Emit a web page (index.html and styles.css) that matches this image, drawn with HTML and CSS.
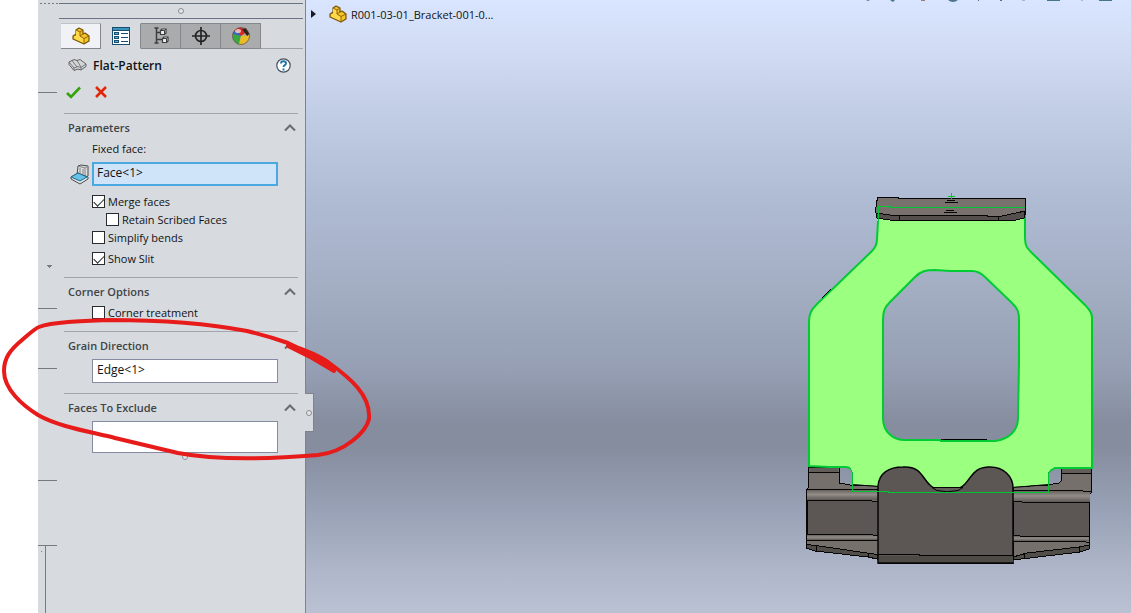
FILE: index.html
```html
<!DOCTYPE html>
<html lang="en">
<head>
<meta charset="utf-8">
<title>Flat-Pattern</title>
<link rel="stylesheet" href="styles.css">
</head>
<body>
<svg class="defs" aria-hidden="true">
  <symbol id="part" viewBox="0 0 18 18">
    <path d="M1 9 4 7V3L7 1 11 3V7L13 6 17 9V14L12 17 1 12Z" fill="#f5c526" stroke="#76520b" stroke-width="1.200" stroke-linejoin="round"/>
    <path d="M4 3 8 5V9L12 11.500V16L2 11.500V9.500L4 8Z" fill="#ffd84b"/>
    <path d="M4 3 8 5 11 3M8 5V9L12 11.500 17 9M12 11.500V17M8 9 11 7M1 9 4 8" fill="none" stroke="#92660b"/>
  </symbol>
  <symbol id="chevron" viewBox="0 0 12 8"><path d="M1 6.5 6 1.5 11 6.5" fill="none" stroke="#686b70" stroke-width="2"/></symbol>
</svg>
<div class="app">
  <div class="rail" aria-hidden="true">
    <svg viewBox="0 0 21 613" width="21" height="613" shape-rendering="crispEdges" fill="none" stroke="#777a7e">
      <path d="M2 3.5H20" stroke-dasharray="2 2"/>
      <path d="M0 92.500H19M0 308.500H19M0 368.500H19M0 480.500H19M0 545.500H19M7.500 545V613"/>
      <path d="M8 265H14L11 268ZM2 552 4 550V552Z" fill="#777a7e" stroke="none"/>
    </svg>
  </div>
  <aside class="panel">
    <div class="grip"><i class="dot"></i></div>
    <nav class="tabs">
      <button class="tab first" aria-label="Feature tree"><svg width="18" height="18"><use href="#part"/></svg></button>
      <button class="tab active" aria-label="Properties">
        <svg width="18" height="18" viewBox="0 0 18 18" shape-rendering="crispEdges"><path fill="#174e70" d="M0 0H18V18H0Z"/><path fill="#fff" d="M1 4H17V17H1Z"/><path fill="#3b94bd" d="M1 1H17V3H1Z"/><path fill="#174e70" d="M2 5H7V8H2ZM2 9H7V12H2ZM2 13H7V16H2ZM9 6H16V7H9ZM9 10H16V11H9ZM9 14H16V15H9Z"/><path fill="#59b4dc" d="M3 6H6V7H3ZM3 10H6V11H3ZM3 14H6V15H3Z"/></svg>
      </button>
      <button class="tab" aria-label="Configurations">
        <svg width="16" height="18" viewBox="0 0 16 18" fill="none" stroke="#3e3e3e"><path d="M1.500 1H5.500M3.500 1V16M1.500 16H5.500M4 5.500H8M4 12.500H9" stroke-width="1.500"/><path d="M7.500 3.500 9 2H13V6L11.500 7.500H7.500ZM9.500 11.500 11 10H15V14L13.500 15.500H9.500Z" fill="#eee" stroke-width="1.200"/><path d="M7.500 3.500H11.500V7.500M11.500 3.500 13 2M9.500 11.500H13.500V15.500M13.500 11.500 15 10"/></svg>
      </button>
      <button class="tab" aria-label="Dimensions">
        <svg width="18" height="18" viewBox="0 0 18 18" fill="none" stroke="#242424" stroke-width="1.700"><circle cx="9" cy="9" r="5.500"/><path d="M9 0V18M0 9H18"/></svg>
      </button>
      <button class="tab" aria-label="Appearance">
        <svg width="18" height="18" viewBox="0 0 18 18"><path fill="#d92820" d="M9 9 1 6A9 9 0 0 1 9 0.500L16 4Z"/><path fill="#3ba83f" d="M9 9 1 6A9 9 0 0 0 7 17.500Z"/><path fill="#e9bd25" d="M9 9 7 17.500A9 9 0 0 0 17.500 8Z"/><path fill="#3767bd" d="M9 9 1 7 2 4.500 5 4Z"/><path fill="#292222" d="M10 2 14 1 17.500 7 15 9Z"/><ellipse cx="6" cy="4" rx="3" ry="2" fill="#fff" opacity=".65"/><circle cx="9" cy="9" r="8.500" fill="none" stroke="#664b3b" stroke-width=".7"/></svg>
      </button>
      <span class="tabs-rest"></span>
    </nav>
    <header class="title">
      <svg width="19" height="14" viewBox="0 0 19 14" stroke="#606366" stroke-linejoin="round"><path d="M1 4 6 1.500 9 2.500 12 1.500 18 6V8.500L13 12 10 11 6 12.500 1 6.500Z" fill="#d3d4d5"/><path d="M1 4 6 10 10 8.500 13 9.500 18 6M4 2.500 9 9M9 2.500 13 9M6 10V12M13 9.500V12" fill="none" stroke-width=".8"/></svg>
      <h1>Flat-Pattern</h1>
      <button class="help" aria-label="Help"><svg width="15" height="15" viewBox="0 0 15 15"><circle cx="7.500" cy="7.500" r="6.700" fill="#fff" stroke="#44515c" stroke-width="1.200"/><path d="M5 5.500C5 2.500 10 2.500 10 5.500 10 7.200 7.500 7 7.500 9" fill="none" stroke="#1f76a8" stroke-width="1.900"/><path d="M6.500 10.500H8.500V12.500H6.500Z" fill="#1f76a8"/></svg></button>
    </header>
    <div class="actions">
      <button aria-label="OK"><svg width="15" height="13" viewBox="0 0 15 13"><path d="M1 7 5 11 14 1.500" fill="none" stroke="#35a10b" stroke-width="2.600"/></svg></button>
      <button aria-label="Cancel"><svg width="12" height="12" viewBox="0 0 12 12"><path d="M1 1 11 11M11 1 1 11" stroke="#e32406" stroke-width="2.500"/></svg></button>
    </div>
    <section>
      <div class="head"><h2>Parameters</h2><button aria-label="Collapse Parameters"><svg width="12" height="8"><use href="#chevron"/></svg></button></div>
      <label class="caption" for="face">Fixed face:</label>
      <div class="face-row">
        <svg width="19" height="21" viewBox="0 0 19 21" stroke="#484b4e" stroke-linejoin="round"><path d="M8 2 11 1 18 2V12L13 15 7 11Z" fill="#ddd"/><path d="M8 2 15 4V13M15 4 18 2M10 4V9M13 5V10" fill="none" stroke="#858585"/><path d="M1 13 8 9 18 13V15L10 20 1 15Z" fill="#e7e7e7"/><path d="M1 13 8 9 17 13 10 17Z" fill="#67c1e8" stroke="#246a8d"/></svg>
        <input class="field selected" id="face" type="text" value="Face&lt;1&gt;">
      </div>
      <div class="checks">
        <label><input type="checkbox" checked>Merge faces</label>
        <label class="nested"><input type="checkbox">Retain Scribed Faces</label>
        <label><input type="checkbox">Simplify bends</label>
        <label class="apart"><input type="checkbox" checked>Show Slit</label>
      </div>
    </section>
    <section>
      <div class="head"><h2>Corner Options</h2><button aria-label="Collapse Corner Options"><svg width="12" height="8"><use href="#chevron"/></svg></button></div>
      <div class="checks single"><label><input type="checkbox">Corner treatment</label></div>
    </section>
    <section class="grain">
      <div class="head"><h2 id="grain">Grain Direction</h2><button aria-label="Collapse Grain Direction"><svg width="12" height="8"><use href="#chevron"/></svg></button></div>
      <input class="field" type="text" aria-labelledby="grain" value="Edge&lt;1&gt;">
    </section>
    <section class="exclude">
      <div class="head"><h2 id="exclude">Faces To Exclude</h2><button aria-label="Collapse Faces To Exclude"><svg width="12" height="8"><use href="#chevron"/></svg></button></div>
      <textarea class="field" aria-labelledby="exclude"></textarea>
      <i class="dot"></i>
    </section>
    <button class="handle" aria-label="Collapse panel"><i class="dot"></i></button>
  </aside>
  <main class="viewport">
    <div class="tree">
      <svg width="6" height="8" viewBox="0 0 6 8"><path d="M0 0 5 4 0 8Z" fill="#171b22"/></svg>
      <svg width="18" height="18"><use href="#part"/></svg>
      <span>R001-03-01_Bracket-001-0...</span>
    </div>
    <svg class="toolbar-edge" width="266" height="3" viewBox="0 0 266 3" aria-hidden="true"><path fill="#49758c" d="M2 0H6L4 1ZM26 0H31L29 2ZM84 0H94Q89 4 84 0ZM114 0H115V1H114ZM136 0H138V1H136ZM183 0H196V1H183ZM235 0H248V1H235Z"/><path fill="#997d7b" d="M57 0H61V1H57Z"/><path fill="#a5b7c8" d="M158 0H161V1H158ZM217 0H219V1H217Z"/></svg>
    <svg class="model" width="300" height="385" viewBox="800 185 300 385" role="img" aria-label="Bracket model">
      <defs>
        <linearGradient id="bend" x1="0" y1="0" x2="0" y2="1"><stop offset="0" stop-color="#68635f"/><stop offset=".45" stop-color="#928d89"/><stop offset="1" stop-color="#5d5854"/></linearGradient>
      </defs>
      <g shape-rendering="crispEdges" stroke="#050505" stroke-width="1" fill="none">
        <path fill="#76706c" d="M809 467H839V483L850 485 878 486V559L868 557 815 551 806 548V490L808 488Z"/>
        <path fill="#76706c" d="M1061 468H1092L1091 493 1090 494 1089 549 1080 552 1013 560V487L1048 485 1059 483 1061 481Z"/>
        <path fill="url(#bend)" stroke="none" d="M807 490H878V500H807Z"/>
        <path fill="url(#bend)" stroke="none" d="M807 535H878V540H807Z"/>
        <path fill="url(#bend)" stroke="none" d="M1013 491H1090V502H1013Z"/>
        <path fill="url(#bend)" stroke="none" d="M1013 536H1089V541H1013Z"/>
        <path fill="#625d59" stroke="none" d="M810 468H838V472H810ZM1062 469H1091V473H1062Z"/>
        <path fill="#5c5754" d="M807 500.500H866L878 501.500V535.500L867 534.500H807ZM1013 501.500 1030 502.500H1089V536.500H1027L1013 535.500Z"/>
        <path d="M809 472.500H839M1061 473.500H1092M807 489.500H878M1013 490.500H1075L1091 491.500M807 540.500H878M1013 541.500H1082L1089 542.500"/>
        <path fill="#514d49" d="M806 544.500 816 545.500 877 554.500V559L868 557 815 551 806 548ZM1089 545 1079 547 1027 553 1013 557V560L1080 552 1089 549Z"/>
        <path d="M816.500 546V551M868.500 553V557M1024.500 554V558M1079.500 547V552"/>
      </g>
      <path fill="#9bff80" fill-rule="evenodd" d="M878 207H1025V238C1025 246 1027 248 1032 253L1086 306C1090 311 1092 313 1092 318V468H1056C1051 468 1049 471 1049 475V484L1013 487 932 489 878 486 852 484V473C852 469 850 467 845 467L809 466V322C809 312 811 309 817 303L873 250C877 245 877 241 877 235ZM935 270C926 270 921 271 915 277L890 302C884 308 883 312 883 320V418C883 432 893 440 905 440H941L995 441C1010 439 1018 430 1018 418L1019 362V320C1019 312 1018 309 1012 303L985 277C981 273 978 271 972 271Z"/>
      <g fill="none" stroke="#00cb35" stroke-width="2">
        <path d="M878 221 877 239C877 244 875 248 872 251L817 304C811 310 809 314 809 322V466L829 467H846L850 468"/>
        <path d="M1025 207V238C1025 246 1027 248 1032 253L1086 306C1090 311 1092 313 1092 318V468H1055L1050 471"/>
        <path d="M935 270C926 270 921 271 915 277L890 302C884 308 883 312 883 320V418C883 432 893 440 905 440H941L941 441H995C1010 439 1018 430 1018 418L1019 362V320C1019 312 1018 309 1012 303L985 277C981 273 978 271 972 271H950L935 270Z"/>
      </g>
      <path stroke="#000" fill="none" d="M941 439.500H987M822 298 831 289"/>
      <path fill="#5c5754" stroke="#050505" stroke-width="1.500" d="M878 563V486C879 473 889 467 903 467 922 466 922 479 931 486 939 493 957 493 965 484 973 475 974 468 988 467 1004 466 1013 477 1013 488V563Z"/>
      <path fill="#625d58" stroke="#050505" d="M932 487.500H963L958 490.500Q947 493 937 490.500Z"/>
      <g shape-rendering="crispEdges"><path fill="#4e4b47" d="M879 556H1013V562H879Z"/><path d="M878 554.500H919L920 555.500H1013M878 563.500H1014" fill="none" stroke="#050505" stroke-width="1"/></g>
      <path fill="none" stroke="#050505" d="M852 484.500 878 486.500M1013 487.500 1049 484.500"/>
      <path fill="none" stroke="#00c633" shape-rendering="crispEdges" d="M850 468 852.500 473V491.500H888V492.500H1048.500V473L1051 470"/>
      <g shape-rendering="crispEdges" stroke="#050505">
        <path fill="#78716d" d="M877.500 197.500H898V198.500H1025.500V214L1024 218 1014 220.500H893L877 218 875.500 210Z"/>
        <path fill="#544f4c" d="M876 213 893 215.500H987V216.500H1000L1016 213 1025 211 1024 218 1014 220.500H893L877 218Z"/>
        <path d="M899.500 216V221M998.500 217V221M877 197.500H898" fill="none"/>
        <path d="M944.500 202.500H957.500M947 200.500H955M943.500 212.500H956.500M946 210.500H954" fill="none"/>
      </g>
      <path fill="none" stroke="#00c633" shape-rendering="crispEdges" d="M878 221V206.500H890V207.500H1025M951.500 193V200M948 196.500H955"/>
    </svg>
  </main>
</div>
<svg class="markup" width="380" height="160" viewBox="0 310 380 160" fill="none" stroke="#e81b1b" stroke-width="4" stroke-linecap="round" stroke-linejoin="round" aria-hidden="true">
  <path d="M288 346 312 358 334 371"/>
  <path d="M334 370C320 359 304 350 288 343 274 338 260 334 247 331 200 322 155 320 110 320 80 321 52 322 39 327 34 329 28 335 22 340 10 350 4 358 4 371 4 389 22 405 38 415 59 427 92 432 115 438L178 453C220 461 270 459 318 455 345 452 366 432 369 419 371 395 350 378 328 362 316 354 302 349 290 345"/>
</svg>
</body>
</html>
```
FILE: styles.css
```css
* { box-sizing: border-box; }
body {
  margin: 0;
  position: relative;
  background: #fff;
  color: #101214;
  font: 11px/15px "Open Sans", "Noto Sans", sans-serif;
  overflow: hidden;
}
h1, h2 { margin: 0; font-weight: 600; }
h1 { font-size: 12px; }
h2 { font-size: 11px; color: #404347; }
button { padding: 0; border: 0; background: none; font: inherit; display: flex; align-items: center; justify-content: center; }
svg { display: block; flex: none; }
.defs { position: absolute; width: 0; height: 0; }
.app { display: flex; min-height: 100vh; padding-left: 38px; }
.rail { width: 21px; background: #d7dbdf; overflow: hidden; }
.panel { position: relative; width: 247px; background: #d7dbdf; border-right: 1px solid #808387; padding-top: 3px; }
.grip { height: 16px; margin-right: 2px; border: solid #6a7385; border-width: 1px 0; display: flex; align-items: center; justify-content: center; }
.dot { display: block; width: 6px; height: 6px; border: 1px solid #8b8e91; border-radius: 50%; background: #e4e6e8; }
.tabs { display: flex; height: 26px; margin: 4px 2px 0; }
.tab { width: 40px; background: #a9abad; border: solid #85888b; border-width: 1px 1px 1px 0; }
.tab.first { background: #f1f2f5; border-top-color: #c0c3c6; }
.tab.active { background: #d7dbdf; border-color: #d7dbdf #85888b #d7dbdf #d7dbdf; }
.tabs-rest { flex: 1; border-bottom: 1px solid #a1a4a7; }
.title { display: flex; align-items: center; height: 18px; margin: 7px 14px 0 9px; }
.title h1 { flex: 1; margin-left: 6px; }
.actions { display: flex; align-items: center; gap: 14px; height: 20px; margin: 8px 7px 11px; }
section { margin: 0 7px 0 5px; padding: 0 20px 12px 28px; border-top: 1px solid #a2a5a9; }
.head { display: flex; align-items: center; justify-content: space-between; height: 27px; margin: 0 -18px 0 -24px; }
.caption { display: block; margin-bottom: 6px; }
.field { display: block; width: 100%; height: 24px; margin: 0; padding: 0 4px 4px; border: 1px solid #858ba3; border-radius: 0; background: #fff; color: #101214; font: inherit; font-size: 12px; resize: none; outline: 0; }
.selected { border: 2px solid #4ba9e1; background: #cfe4f8; padding: 0 3px 4px; }
.face-row { display: flex; align-items: center; gap: 3px; margin-left: -22px; }
.face-row .field { flex: 1; width: auto; min-width: 0; }
.checks { display: flex; flex-direction: column; gap: 5px; margin-top: 9px; }
.checks.single { margin-top: 1px; }
.checks label { display: flex; align-items: center; gap: 3px; height: 13px; }
.checks .nested { margin-left: 14px; }
.checks .apart { margin-top: 3px; }
.checks input { appearance: none; flex: none; width: 13px; height: 13px; margin: 0; border: 1px solid #292c2f; background: #fff; display: grid; place-items: center; }
.checks input:checked::before { content: ""; width: 9px; height: 5px; border: solid #292c2f; border-width: 0 0 1px 1px; transform: translateY(-1px) rotate(-45deg); }
.grain { padding-bottom: 10px; }
.exclude { padding-bottom: 0; }
.exclude .field { height: 32px; }
.exclude .dot { margin: 1px auto; }
.handle { position: absolute; left: 100%; top: 393px; width: 9px; height: 39px; background: #d7dbdf; border: 1px solid #808387; border-left: 0; z-index: 1; }
.viewport { position: relative; flex: 1; min-width: 0; background: linear-gradient(180deg, #d9e5ff 0%, #cfdaf1 10%, #c2cde6 18%, #afbbd3 33%, #a2adc2 48%, #969fb4 60%, #868d9f 69%, #868d9f 73%, #9aa3b7 84%, #afb6c9 93%, #bac1d3 100%); }
.tree { display: flex; align-items: center; height: 28px; padding-left: 5px; font-size: 11px; }
.tree svg + svg { margin-left: 12px; }
.tree span { margin-left: 4px; }
.toolbar-edge { position: absolute; top: 0; right: 1px; }
.model { position: absolute; top: 185px; right: 31px; }
.markup { position: absolute; left: 0; top: 310px; z-index: 2; pointer-events: none; }
```
